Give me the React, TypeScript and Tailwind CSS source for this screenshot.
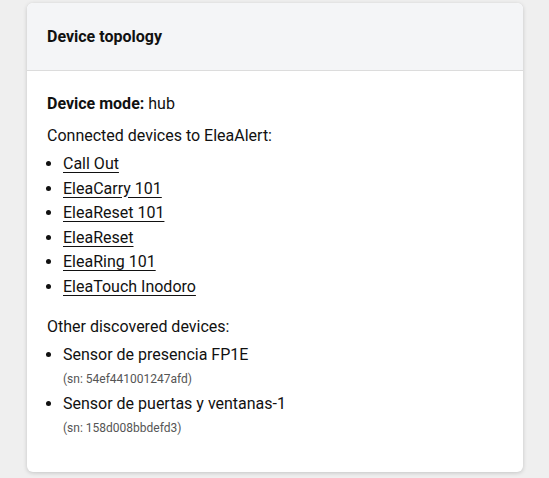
import React from "react";

const connected = [
  "Call Out",
  "EleaCarry 101",
  "EleaReset 101",
  "EleaReset",
  "EleaRing 101",
  "EleaTouch Inodoro",
];

const others = [
  { name: "Sensor de presencia FP1E", sn: "54ef441001247afd" },
  { name: "Sensor de puertas y ventanas-1", sn: "158d008bbdefd3" },
];

export default function App() {
  return (
    <div
      className="min-h-[478px] w-full bg-[#efefef] pt-[3px] pb-[6px]"
      style={{ fontFamily: "Roboto, 'Noto Sans', sans-serif" }}
    >
      <div className="ml-[27px] w-[496px] overflow-hidden rounded-[6px] bg-white shadow-[0_1px_4px_rgba(0,0,0,0.18)] text-[#111]">
        <div className="flex h-[68px] items-center border-b border-[#dcdcdc] bg-[#f4f5f7] px-5">
          <h2 className="text-[16px] font-bold leading-6">Device topology</h2>
        </div>
        <div className="px-5 pt-[21px] pb-[31px] text-[16px]">
          <p className="leading-6">
            <span className="font-bold">Device mode:</span> hub
          </p>
          <p className="mt-2 leading-6">Connected devices to EleaAlert:</p>
          <ul className="mt-1 list-disc pl-4">
            {connected.map((d) => (
              <li key={d} className="leading-[24.6px]">
                <a href="#" className="underline underline-offset-[3px]">
                  {d}
                </a>
              </li>
            ))}
          </ul>
          <p className="mt-[15px] leading-6">Other discovered devices:</p>
          <ul className="mt-1 list-disc pl-4">
            {others.map((d) => (
              <li key={d.sn} className="leading-6">
                {d.name}
                <div className="flex h-[25px] items-center text-[12px] text-[#555]">
                  (sn: {d.sn})
                </div>
              </li>
            ))}
          </ul>
        </div>
      </div>
    </div>
  );
}
